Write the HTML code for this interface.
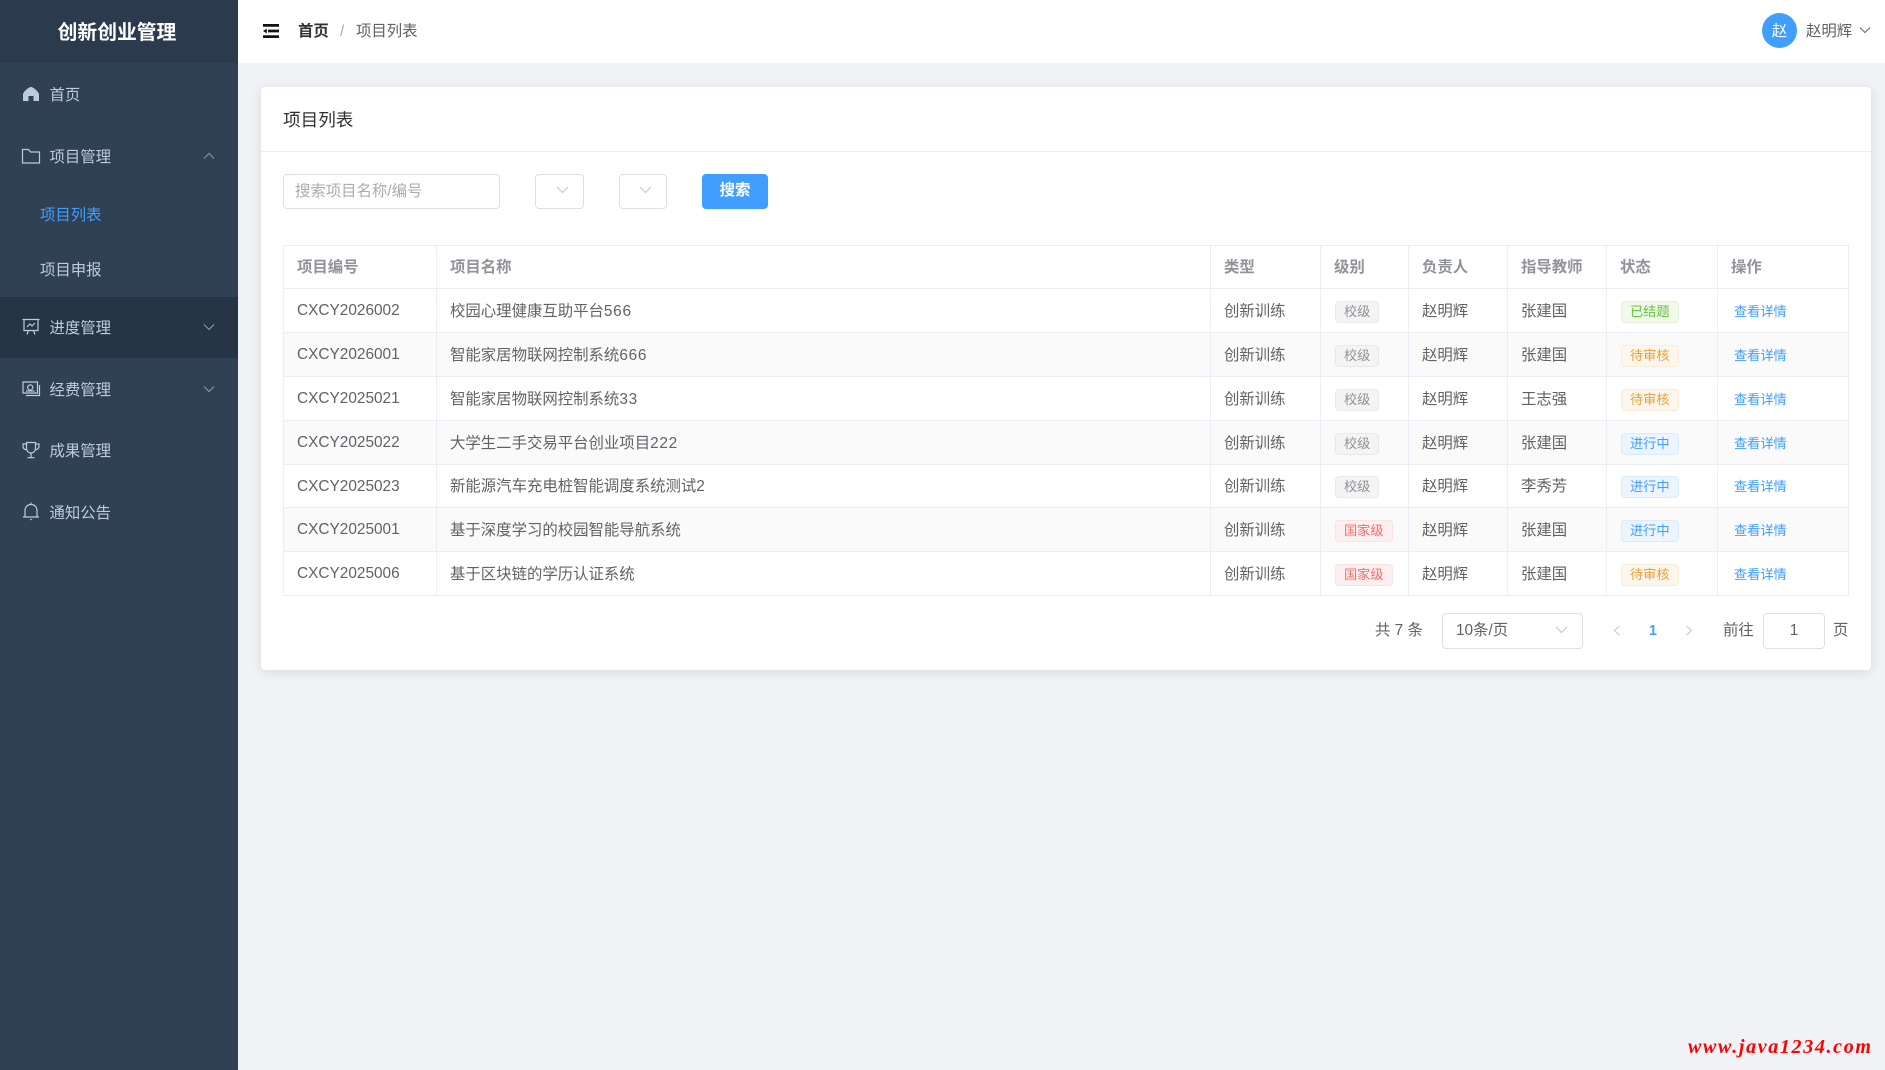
<!DOCTYPE html>
<html lang="zh-CN">
<head>
<meta charset="utf-8">
<title>项目列表</title>
<style>
*{box-sizing:border-box;margin:0;padding:0}
html,body{width:1885px;height:1070px;overflow:hidden;background:#f0f2f5;font-family:"Liberation Sans","Noto Sans CJK SC",sans-serif;font-size:15.4px;color:#606266}
.a{position:absolute;white-space:nowrap}
#side{position:absolute;left:0;top:0;width:238px;height:1070px;background:#304156}
#logo{position:absolute;left:0;top:0;width:238px;height:63px;background:#2b3a4d;color:#fff;font-weight:bold;font-size:19.8px;line-height:66px;text-align:center;padding-right:4px}
.mi{position:absolute;left:49.5px;color:#bfcbd9;font-size:15.4px;line-height:24px;white-space:nowrap}
.ic{position:absolute;left:21px;width:20px;height:20px;fill:none;stroke:#bfcbd9;stroke-width:1.2}
.ar{position:absolute;left:203px;width:12px;height:8px;fill:none;stroke:#909aa8;stroke-width:1}
#head{position:absolute;left:238px;top:0;width:1647px;height:63px;background:#fff}
#card{position:absolute;left:261px;top:87px;width:1610px;height:583px;background:#fff;border-radius:4px;box-shadow:0 2px 12px rgba(0,0,0,.1)}
.box{position:absolute;background:#fff;border:1px solid #dcdfe6;border-radius:4px}
.chev{position:absolute;fill:none;stroke:#c0c4cc;stroke-width:1}
table{position:absolute;left:283px;top:245px;width:1565px;border-collapse:collapse;table-layout:fixed;background:#fff}
td,th{border:1px solid #ebeef5;padding:0 0 2px 13px;text-align:left;white-space:nowrap;font-size:15.4px;overflow:hidden;vertical-align:middle}
td:first-child{padding:1px 0 0 13px}
th{color:#909399;font-weight:bold}
tr:nth-child(odd) td{background:#fafafa}
.t{display:inline-block;height:22px;line-height:20px;padding:0 8px;margin-left:1px;font-size:13.2px;border-radius:4px;border:1px solid;position:relative;top:2px;vertical-align:middle}
.g{background:#f4f4f5;border-color:#e9e9eb;color:#909399}
.s{background:#f0f9eb;border-color:#e1f3d8;color:#67c23a}
.w{background:#fdf6ec;border-color:#faecd8;color:#e6a23c}
.p{background:#ecf5ff;border-color:#d9ecff;color:#409eff}
.d{background:#fef0f0;border-color:#fde2e2;color:#f56c6c}
.l{color:#409eff;font-size:13.2px;padding-left:3px;position:relative;top:1px}
.n{letter-spacing:.7px}
</style>
</head>
<body>

<div id="side">
  <div id="logo">创新创业管理</div>

  <svg class="ic" style="top:84px" viewBox="0 0 20 20"><path d="M10 3 C8 3 3 7 2 10 V17 H7.5 V12 H12.5 V17 H18 V10 C17 7 12 3 10 3Z" fill="#bfcbd9" stroke="none"/></svg>
  <div class="mi" style="top:83.5px">首页</div>

  <svg class="ic" style="top:146px" viewBox="0 0 20 20"><path d="M1.5 3.5H7.5L9.5 6H18.5V17H1.5Z"/></svg>
  <div class="mi" style="top:145.5px">项目管理</div>
  <svg class="ar" style="top:152px" viewBox="0 0 12 8"><polyline points="1,6.5 6,1.5 11,6.5"/></svg>

  <div class="mi" style="left:40px;top:203.5px;color:#409eff">项目列表</div>
  <div class="mi" style="left:40px;top:258.5px">项目申报</div>

  <div style="position:absolute;left:0;top:297px;width:238px;height:61px;background:#263445"></div>
  <svg class="ic" style="top:317px" viewBox="0 0 20 20"><path d="M1.5 2.5H18.5M3 2.5V13.5H17V2.5M6 17.5L7.5 13.5M14 17.5L12.5 13.5M6 10L9 7L11 9L14 6"/></svg>
  <div class="mi" style="top:316.5px">进度管理</div>
  <svg class="ar" style="top:323px" viewBox="0 0 12 8"><polyline points="1,1.5 6,6.5 11,1.5"/></svg>

  <svg class="ic" style="top:379px" viewBox="0 0 20 20"><path d="M2 3H16.5V14H2ZM18.5 6V16.5H5"/><circle cx="9.2" cy="8.5" r="2.6"/><path d="M5 12H13.5"/></svg>
  <div class="mi" style="top:378.5px">经费管理</div>
  <svg class="ar" style="top:385px" viewBox="0 0 12 8"><polyline points="1,1.5 6,6.5 11,1.5"/></svg>

  <svg class="ic" style="top:440px" viewBox="0 0 20 20"><path d="M5.5 2.5H14.5V8C14.5 11 12.5 13 10 13C7.5 13 5.5 11 5.5 8ZM5.5 4H2V6.5C2 8.5 3.5 9.5 5.8 9.8M14.5 4H18V6.5C18 8.5 16.5 9.5 14.2 9.8M10 13V17.5M6.5 17.7H13.5"/></svg>
  <div class="mi" style="top:439.5px">成果管理</div>

  <svg class="ic" style="top:501px" viewBox="0 0 20 20"><path d="M2 16H18M4 16V9.5C4 6 6.5 3.5 10 3.5C13.5 3.5 16 6 16 9.5V16M10 1.5V3.5M9.2 18.5H10.8"/></svg>
  <div class="mi" style="top:501.5px">通知公告</div>
</div>

<div id="head"></div>
<svg class="a" style="left:263px;top:24px" width="16" height="14" viewBox="0 0 16 14"><path d="M0 0H16V2.8H0ZM5 5.6H16V8.4H5ZM0 11.2H16V14H0ZM0 7L3.8 4.6V9.4Z" fill="#111"/></svg>
<div class="a" style="left:298px;top:20px;line-height:24px;font-weight:bold;color:#303133">首页</div>
<div class="a" style="left:340px;top:20px;line-height:24px;color:#a8abb2">/</div>
<div class="a" style="left:356px;top:20px;line-height:24px;color:#606266">项目列表</div>
<div class="a" style="left:1762px;top:13px;width:35px;height:35px;border-radius:50%;background:#409eff;color:#fff;text-align:center;line-height:37px;font-size:15.4px">赵</div>
<div class="a" style="left:1806px;top:20px;line-height:24px;color:#606266">赵明辉</div>
<svg class="chev" style="left:1859px;top:26px;stroke:#606266" width="12" height="8" viewBox="0 0 12 8"><polyline points="1,1.5 6,6.5 11,1.5"/></svg>

<div id="card"></div>
<div class="a" style="left:283px;top:107px;font-size:17.6px;line-height:26px;color:#303133">项目列表</div>
<div class="a" style="left:261px;top:151px;width:1610px;height:1px;background:#ebeef5"></div>

<div class="box" style="left:283px;top:174px;width:217px;height:35px"></div>
<div class="a" style="left:295px;top:180px;line-height:24px;color:#a8abb2">搜索项目名称/编号</div>
<div class="box" style="left:535px;top:174px;width:49px;height:35px"></div>
<svg class="chev" style="left:556px;top:186px" width="13" height="8" viewBox="0 0 13 8"><polyline points="1,1 6.5,6.5 12,1"/></svg>
<div class="box" style="left:619px;top:174px;width:48px;height:35px"></div>
<svg class="chev" style="left:639px;top:186px" width="13" height="8" viewBox="0 0 13 8"><polyline points="1,1 6.5,6.5 12,1"/></svg>
<div class="a" style="left:702px;top:174px;width:66px;height:35px;border-radius:4px;background:#409eff;color:#fff;font-weight:bold;text-align:center;line-height:34px">搜索</div>

<table>
<colgroup><col style="width:153px"><col style="width:774px"><col style="width:110px"><col style="width:88px"><col style="width:99px"><col style="width:99px"><col style="width:111px"><col style="width:131px"></colgroup>
<tbody>
<tr style="height:43px"><th>项目编号</th><th>项目名称</th><th>类型</th><th>级别</th><th>负责人</th><th>指导教师</th><th>状态</th><th>操作</th></tr>
<tr style="height:44px"><td>CXCY2026002</td><td>校园心理健康互助平台<span class="n">566</span></td><td>创新训练</td><td><span class="t g">校级</span></td><td>赵明辉</td><td>张建国</td><td><span class="t s">已结题</span></td><td><span class="l">查看详情</span></td></tr>
<tr style="height:44px"><td>CXCY2026001</td><td>智能家居物联网控制系统<span class="n">666</span></td><td>创新训练</td><td><span class="t g">校级</span></td><td>赵明辉</td><td>张建国</td><td><span class="t w">待审核</span></td><td><span class="l">查看详情</span></td></tr>
<tr style="height:44px"><td>CXCY2025021</td><td>智能家居物联网控制系统<span class="n">33</span></td><td>创新训练</td><td><span class="t g">校级</span></td><td>赵明辉</td><td>王志强</td><td><span class="t w">待审核</span></td><td><span class="l">查看详情</span></td></tr>
<tr style="height:44px"><td>CXCY2025022</td><td>大学生二手交易平台创业项目<span class="n">222</span></td><td>创新训练</td><td><span class="t g">校级</span></td><td>赵明辉</td><td>张建国</td><td><span class="t p">进行中</span></td><td><span class="l">查看详情</span></td></tr>
<tr style="height:43px"><td>CXCY2025023</td><td>新能源汽车充电桩智能调度系统测试<span class="n">2</span></td><td>创新训练</td><td><span class="t g">校级</span></td><td>赵明辉</td><td>李秀芳</td><td><span class="t p">进行中</span></td><td><span class="l">查看详情</span></td></tr>
<tr style="height:44px"><td>CXCY2025001</td><td>基于深度学习的校园智能导航系统</td><td>创新训练</td><td><span class="t d">国家级</span></td><td>赵明辉</td><td>张建国</td><td><span class="t p">进行中</span></td><td><span class="l">查看详情</span></td></tr>
<tr style="height:44px"><td>CXCY2025006</td><td>基于区块链的学历认证系统</td><td>创新训练</td><td><span class="t d">国家级</span></td><td>赵明辉</td><td>张建国</td><td><span class="t w">待审核</span></td><td><span class="l">查看详情</span></td></tr>
</tbody>
</table>

<div class="a" style="left:1375px;top:619px;line-height:24px">共 7 条</div>
<div class="box" style="left:1442px;top:613px;width:141px;height:36px"></div>
<div class="a" style="left:1456px;top:619px;line-height:24px">10条/页</div>
<svg class="chev" style="left:1555px;top:626px" width="13" height="8" viewBox="0 0 13 8"><polyline points="1,1 6.5,6.5 12,1"/></svg>
<svg class="chev" style="left:1613px;top:625px" width="8" height="11" viewBox="0 0 8 11"><polyline points="6.5,1 1.5,5.5 6.5,10"/></svg>
<div class="a" style="left:1649px;top:619px;line-height:24px;font-weight:bold;color:#409eff;font-size:14.3px">1</div>
<svg class="chev" style="left:1685px;top:625px" width="8" height="11" viewBox="0 0 8 11"><polyline points="1.5,1 6.5,5.5 1.5,10"/></svg>
<div class="a" style="left:1723px;top:619px;line-height:24px">前往</div>
<div class="box" style="left:1763px;top:613px;width:62px;height:36px;text-align:center;line-height:34px">1</div>
<div class="a" style="left:1833px;top:619px;line-height:24px">页</div>

<div class="a" style="left:1688px;top:1035px;font-family:'Liberation Serif',serif;font-weight:bold;font-style:italic;font-size:20px;line-height:24px;letter-spacing:1.65px;color:#f00">www.java1234.com</div>

</body>
</html>
